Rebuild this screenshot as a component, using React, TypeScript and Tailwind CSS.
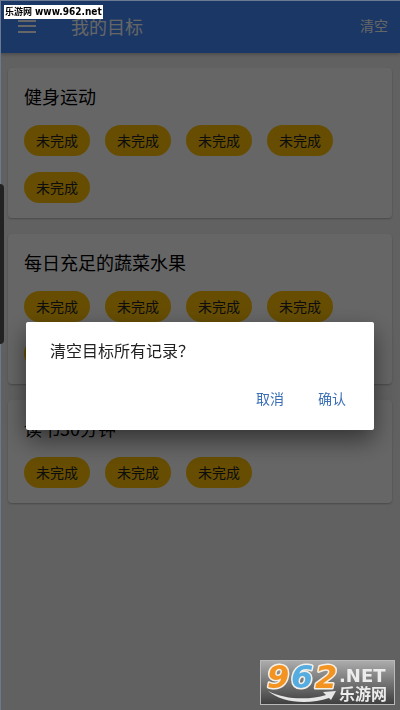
const goals = [
  { name: "健身运动", records: 5 },
  { name: "每日充足的蔬菜水果", records: 5 },
  { name: "读书30分钟", records: 3 },
]

function MenuIcon() {
  return (
    <svg width="18" height="13" viewBox="0 0 18 13" fill="currentColor" aria-hidden="true">
      <path d="M0 0h18v2H0zM0 5h18v2H0zM0 11h18v2H0z" />
    </svg>
  )
}

function GoalCard({ name, records }: { name: string; records: number }) {
  return (
    <section className="rounded bg-white px-4 pt-[15px] pb-[15px] shadow-[0_1px_2px_rgba(0,0,0,0.25)]">
      <h2 className="mb-4 text-[18px] leading-[26px] text-black">{name}</h2>
      <div className="flex flex-wrap gap-x-[15px] gap-y-4">
        {Array.from({ length: records }, (_, i) => (
          <button key={i} className="h-[31px] rounded-full bg-[#ffc107] px-3 pb-[2px] text-[14px] leading-7 text-[#212121]">
            未完成
          </button>
        ))}
      </div>
    </section>
  )
}

function SiteLogo() {
  return (
    <svg className="fixed right-[5px] bottom-[5px] z-30" width="135" height="45" viewBox="0 0 135 45">
      <defs>
        <linearGradient id="plate" x1="0" y1="0" x2="0" y2="1">
          <stop offset="0" stopColor="#adadad" />
          <stop offset="0.5" stopColor="#757575" />
          <stop offset="1" stopColor="#3e3e3e" />
        </linearGradient>
      </defs>
      <rect x="0.5" y="0.5" width="134" height="44" fill="url(#plate)" stroke="#b9b9b9" />
      <g
        fontFamily="'DejaVu Sans', sans-serif"
        fontSize="32"
        fontWeight="700"
        fontStyle="italic"
        stroke="#f4f0e8"
        strokeWidth="3"
        strokeLinejoin="round"
        paintOrder="stroke"
      >
        <text x="7" y="28" fill="#f39322">9</text>
        <text x="31" y="28" fill="#55ace0">6</text>
        <text x="55" y="28" fill="#f39322">2</text>
      </g>
      <path d="M8 31c17 9 42 9 58 4l-3-3 13-1-5 9-2-2C48 45 22 43 8 31z" fill="#e6e6e6" />
      <text x="79" y="22" fontFamily="'DejaVu Sans', sans-serif" fontSize="18" fontWeight="700" fill="#ececec">
        .NET
      </text>
      <text x="79" y="40" fontFamily="'Noto Sans CJK SC', sans-serif" fontSize="16" fontWeight="700" fill="#ececec">
        乐游网
      </text>
    </svg>
  )
}

export default function App() {
  return (
    <div className="min-h-screen bg-[#f3f3f3] font-['Noto_Sans_CJK_SC',sans-serif]">
      <header className="flex h-[53px] items-center bg-[#4489fd] pr-3 pl-[18px] text-white shadow-[0_1px_4px_rgba(0,0,0,0.3)]">
        <button aria-label="菜单">
          <MenuIcon />
        </button>
        <h1 className="ml-[35px] flex-1 pb-[2px] text-[18px] leading-[26px]">我的目标</h1>
        <button className="pb-[2px] text-[14px]">清空</button>
      </header>

      <main className="flex flex-col gap-4 px-2 pt-[15px] pb-4">
        {goals.map((goal) => (
          <GoalCard key={goal.name} name={goal.name} records={goal.records} />
        ))}
      </main>

      <div className="fixed inset-0 z-10 flex items-center justify-center bg-black/60 px-[26px] pt-[42px] shadow-[inset_1px_1px_0_#6b7a90]">
        <div
          role="dialog"
          aria-modal="true"
          aria-labelledby="dialog-title"
          className="w-full rounded-xs bg-white px-6 pt-4 pb-5 shadow-[0_10px_24px_rgba(0,0,0,0.5)]"
        >
          <p id="dialog-title" className="text-[16px] leading-6 text-[#222222]">
            清空目标所有记录？
          </p>
          <div className="mt-6 flex justify-end gap-[34px] pr-1 text-[14px] leading-6 text-[#3a6fb8]">
            <button>取消</button>
            <button>确认</button>
          </div>
        </div>
      </div>

      <div className="fixed top-[184px] left-0 z-20 h-40 w-1 rounded-r-sm bg-[#222222]" />
      <div className="fixed top-[5px] left-1 z-20 flex h-[14px] items-center gap-[3px] bg-white px-px text-[9px] leading-[14px] font-bold text-black">
        <span>乐游网</span>
        <span className="font-['DejaVu_Sans_Condensed','DejaVu_Sans',sans-serif] text-[10px]">www.962.net</span>
      </div>
      <SiteLogo />
    </div>
  )
}
